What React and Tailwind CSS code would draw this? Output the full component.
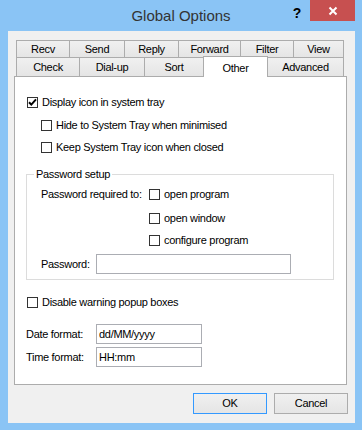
import React from "react";

const tabBase =
  "flex items-center justify-center border-t border-l border-[#acacac] bg-linear-to-b from-[#f0f0f0] to-[#e5e5e5]";

function Check({ checked }) {
  return (
    <span className="w-[11px] h-[11px] border border-[#333] bg-white flex items-center justify-center shrink-0">
      {checked && (
        <svg width="11" height="11" viewBox="0 0 11 11" className="-m-px">
          <path d="M2 5.2 L4.3 7.6 L9 2.4" stroke="#000" strokeWidth="2" fill="none" />
        </svg>
      )}
    </span>
  );
}

function CheckRow({ checked, label, className = "" }) {
  return (
    <div className={"flex items-center h-[20px] gap-[4px] " + className}>
      <Check checked={checked} />
      <span>{label}</span>
    </div>
  );
}

export default function App() {
  // first row of tabs, widths measured off the screenshot
  const row1 = [
    ["Recv", 53],
    ["Send", 55],
    ["Reply", 54],
    ["Forward", 62],
    ["Filter", 53],
  ];

  return (
    <div className="w-[362px] h-[430px] flex flex-col bg-[#8ac4f5] font-['Liberation_Sans',Arial,sans-serif] text-[11px] tracking-[-0.3px] text-black">
      {/* title bar */}
      <div className="h-[31px] relative flex items-start justify-center">
        <div className="mt-[5px] text-[15px] tracking-normal text-[#333]">Global Options</div>
        <div className="absolute top-0 right-[7px] flex items-start">
          <span className="w-[26px] mt-[3px] text-center text-[14px] font-bold tracking-normal">?</span>
          <span className="w-[45px] h-[21px] bg-[#c75050] flex items-center justify-center">
            <svg width="10" height="10" viewBox="0 0 10 10">
              <path d="M1.5 1.5 L8.5 8.5 M8.5 1.5 L1.5 8.5" stroke="#fff" strokeWidth="2" />
            </svg>
          </span>
        </div>
      </div>

      {/* client area */}
      <div className="ml-[8px] w-[347px] h-[392px] bg-[#f0f0f0] pt-[9px] pl-[6px] flex flex-col">
        <div className="ml-[2px] flex h-[17px]">
          {row1.map(([t, w]) => (
            <div key={t} className={tabBase} style={{ width: w }}>
              {t}
            </div>
          ))}
          <div className={tabBase + " border-r w-[51px]"}>View</div>
        </div>
        <div className="ml-[2px] flex items-end h-[19px]">
          <div className={tabBase + " h-[19px] w-[63px] pt-[1px]"}>Check</div>
          <div className={tabBase + " h-[19px] w-[65px] pt-[1px]"}>Dial-up</div>
          <div className={tabBase + " h-[19px] w-[59px] pt-[1px]"}>Sort</div>
          <div className="relative z-10 h-[21px] -mb-px w-[65px] bg-white border-t border-l border-r border-[#acacac] flex justify-center pt-[3px]">
            Other
          </div>
          <div className="h-[19px] w-[76px] flex items-center justify-center pt-[1px] border-t border-r border-[#acacac] bg-linear-to-b from-[#f0f0f0] to-[#e5e5e5]">
            Advanced
          </div>
        </div>

        {/* tab page */}
        <div className="w-[333px] h-[309px] bg-white border border-[#acacac] flex flex-col">
          <CheckRow checked label="Display icon in system tray" className="mt-[15px] ml-[12px]" />
          <CheckRow label="Hide to System Tray when minimised" className="mt-[3px] ml-[26px]" />
          <CheckRow label="Keep System Tray icon when closed" className="mt-[2px] ml-[26px]" />

          <fieldset className="mt-[10px] ml-[11px] w-[308px] border border-[#dcdcdc] pb-[5px]">
            <legend className="ml-[7px] px-[2px] leading-[14px]">Password setup</legend>
            <div className="flex mt-[3px] ml-[14px]">
              <div className="w-[108px] h-[20px] flex items-center">Password required to:</div>
              <div className="flex flex-col">
                <CheckRow label="open program" />
                <CheckRow label="open window" className="mt-[4px]" />
                <CheckRow label="configure program" className="mt-[2px]" />
              </div>
            </div>
            <div className="flex items-center mt-[4px] ml-[14px] h-[20px]">
              <span className="w-[55px]">Password:</span>
              <input className="w-[195px] h-[20px] border border-[#abadb3] bg-white px-[2px] outline-none" defaultValue="" />
            </div>
          </fieldset>

          <CheckRow label="Disable warning popup boxes" className="mt-[12px] ml-[12px]" />

          <div className="flex items-center mt-[12px] ml-[11px] h-[20px]">
            <span className="w-[70px]">Date format:</span>
            <input className="w-[106px] h-[20px] border border-[#abadb3] bg-white px-[2px] outline-none" defaultValue="dd/MM/yyyy" />
          </div>
          <div className="flex items-center mt-[3px] ml-[11px] h-[20px]">
            <span className="w-[70px]">Time format:</span>
            <input className="w-[106px] h-[20px] border border-[#abadb3] bg-white px-[2px] outline-none" defaultValue="HH:mm" />
          </div>
        </div>

        {/* dialog buttons */}
        <div className="flex justify-end gap-[7px] mt-[8px] pr-[7px]">
          <button className="w-[74px] h-[21px] border border-[#3399ff] bg-linear-to-b from-[#f0f0f0] to-[#e5e5e5]">OK</button>
          <button className="w-[74px] h-[21px] border border-[#acacac] bg-linear-to-b from-[#f0f0f0] to-[#e5e5e5]">Cancel</button>
        </div>
      </div>
    </div>
  );
}
